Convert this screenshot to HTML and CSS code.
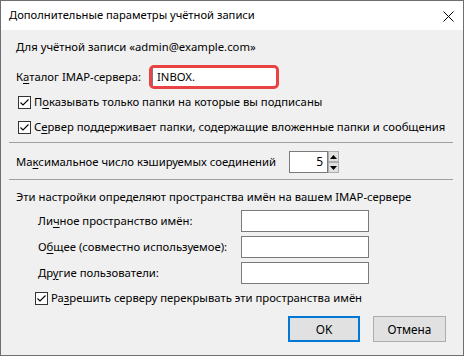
FILE: index.html
```html
<!DOCTYPE html>
<html lang="ru">
<head>
    <meta charset="UTF-8">
    <title>Дополнительные параметры учётной записи</title>
    <link rel="stylesheet" href="styles.css">
</head>
<body>
    <div class="dialog">
        <div class="titlebar">
            <span class="title">Дополнительные параметры учётной записи</span>
            <span class="close">
                <svg width="11" height="11" viewBox="0 0 11 11"><path d="M0.5 0.5 L10.5 10.5 M10.5 0.5 L0.5 10.5" stroke="#000" stroke-width="1" fill="none"/></svg>
            </span>
        </div>
        <div class="content">
            <div class="row account">Для учётной записи «admin@example.com»</div>

            <div class="row catalog">
                <label class="catalog-label">К<u>а</u>талог IMAP-сервера:</label>
                <div class="highlight"><div class="field">INBOX.</div></div>
            </div>

            <div class="row check c1">
                <span class="box"><svg width="13" height="13" viewBox="0 0 13 13"><rect x="0.5" y="0.5" width="12" height="12" fill="#fff" stroke="#333"/><path d="M2.5 6.5 L5 9 L10.5 3.5" stroke="#000" stroke-width="1.1" fill="none"/></svg></span>
                <span>П<u>о</u>казывать только папки на которые вы подписаны</span>
            </div>
            <div class="row check c2">
                <span class="box"><svg width="13" height="13" viewBox="0 0 13 13"><rect x="0.5" y="0.5" width="12" height="12" fill="#fff" stroke="#333"/><path d="M2.5 6.5 L5 9 L10.5 3.5" stroke="#000" stroke-width="1.1" fill="none"/></svg></span>
                <span>С<u>е</u>рвер поддерживает папки, содержащие вложенные папки и сообщения</span>
            </div>

            <div class="separator s1"></div>

            <div class="row max">
                <label class="max-label">Ма<u>к</u>симальное число кэшируемых соединений</label>
                <div class="spinner">
                    <div class="spin-field">5</div>
                    <div class="spin-buttons">
                        <div class="spin-btn"><svg width="7" height="4" viewBox="0 0 7 4"><path d="M3.5 0 L7 4 L0 4 Z" fill="#000"/></svg></div>
                        <div class="spin-btn"><svg width="7" height="4" viewBox="0 0 7 4"><path d="M0 0 L7 0 L3.5 4 Z" fill="#000"/></svg></div>
                    </div>
                </div>
            </div>

            <div class="separator s2"></div>

            <div class="row ns-text">Эти настройки определяют пространства имён на вашем IMAP-сервере</div>

            <div class="row ns r1">
                <label class="ns-label">Ли<u>ч</u>ное пространство имён:</label>
                <div class="input"></div>
            </div>
            <div class="row ns r2">
                <label class="ns-label">О<u>б</u>щее (совместно используемое):</label>
                <div class="input"></div>
            </div>
            <div class="row ns r3">
                <label class="ns-label">Др<u>у</u>гие пользователи:</label>
                <div class="input"></div>
            </div>

            <div class="row check c3">
                <span class="box"><svg width="13" height="13" viewBox="0 0 13 13"><rect x="0.5" y="0.5" width="12" height="12" fill="#fff" stroke="#333"/><path d="M2.5 6.5 L5 9 L10.5 3.5" stroke="#000" stroke-width="1.1" fill="none"/></svg></span>
                <span>Ра<u>з</u>решить серверу перекрывать эти пространства имён</span>
            </div>

            <div class="buttons">
                <button class="btn btn-default">OK</button>
                <button class="btn">Отмена</button>
            </div>
        </div>
    </div>
</body>
</html>
```
FILE: styles.css
```css
body {
    margin: 0;
    background-color: #f0f0f0;
    font-family: 'Noto Sans', 'Open Sans', sans-serif;
    font-size: 11.3px;
    color: #000;
}
.dialog {
    width: 464px;
    height: 356px;
    box-sizing: border-box;
    border: 1px solid #6e6e6e;
    background-color: #f0f0f0;
    display: flex;
    flex-direction: column;
}
.titlebar {
    height: 29px;
    background-color: #fff;
    display: flex;
    align-items: center;
    justify-content: space-between;
    padding: 0 9px 0 8px;
    flex-shrink: 0;
}
.title {
    font-size: 11.2px;
    line-height: 16px;
    margin-top: -2px;
}
.close {
    display: flex;
    margin-top: 1px;
}
.content {
    padding: 0 8px;
    display: flex;
    flex-direction: column;
}
.row {
    display: flex;
    align-items: center;
    padding-left: 7px;
    line-height: 16px;
    height: 16px;
    white-space: nowrap;
}
u {
    text-decoration-thickness: 1px;
    text-underline-offset: 2px;
}
.account {
    margin-top: 9px;
}
.catalog {
    margin-top: 10px;
    height: 24px;
}
.catalog-label {
    width: 133px;
}
.highlight {
    width: 130px;
    height: 24px;
    box-sizing: border-box;
    border: 3px solid #e94242;
    border-radius: 5px;
    background-color: #fff;
}
.field {
    height: 100%;
    box-sizing: border-box;
    border-left: 1px solid #7a7a7a;
    padding-left: 4px;
    line-height: 18px;
}
.check .box {
    display: flex;
    width: 13px;
    height: 13px;
    margin: 0 3px 0 2px;
}
.c1 {
    margin-top: 5px;
}
.c2 {
    margin-top: 9px;
}
.c3 {
    margin-top: 6px;
    padding-left: 24px;
}
.separator {
    height: 1px;
    background-color: #a0a0a0;
    margin-right: 2px;
}
.s1 {
    margin-top: 7px;
}
.s2 {
    margin-top: 6px;
}
.max {
    margin-top: 8px;
    height: 22px;
}
.max-label {
    width: 273px;
}
.spinner {
    display: flex;
    height: 22px;
}
.spin-field {
    width: 39px;
    height: 22px;
    box-sizing: border-box;
    border: 1px solid #7a7a7a;
    background-color: #fff;
    text-align: right;
    padding-right: 4px;
    line-height: 20px;
    font-size: 12px;
}
.spin-buttons {
    display: flex;
    flex-direction: column;
    width: 11px;
}
.spin-btn {
    height: 11px;
    box-sizing: border-box;
    border: 1px solid #adadad;
    background-color: #e1e1e1;
    display: flex;
    align-items: center;
    justify-content: center;
}
.ns-text {
    margin-top: 9px;
}
.ns {
    height: 22px;
    padding-left: 29px;
}
.r1 {
    margin-top: 5px;
}
.r2, .r3 {
    margin-top: 4px;
}
.ns-label {
    width: 203px;
}
.input {
    width: 128px;
    height: 22px;
    box-sizing: border-box;
    border: 1px solid #7a7a7a;
    background-color: #fff;
}
.buttons {
    margin-top: 10px;
    display: flex;
    justify-content: flex-end;
    gap: 13px;
    padding-right: 9px;
}
.btn {
    width: 73px;
    height: 26px;
    box-sizing: border-box;
    border: 1px solid #adadad;
    background-color: #e1e1e1;
    font-family: inherit;
    font-size: 11.8px;
    color: #000;
    padding: 0;
}
.btn-default {
    width: 72px;
    border: 2px solid #0078d7;
}
```
